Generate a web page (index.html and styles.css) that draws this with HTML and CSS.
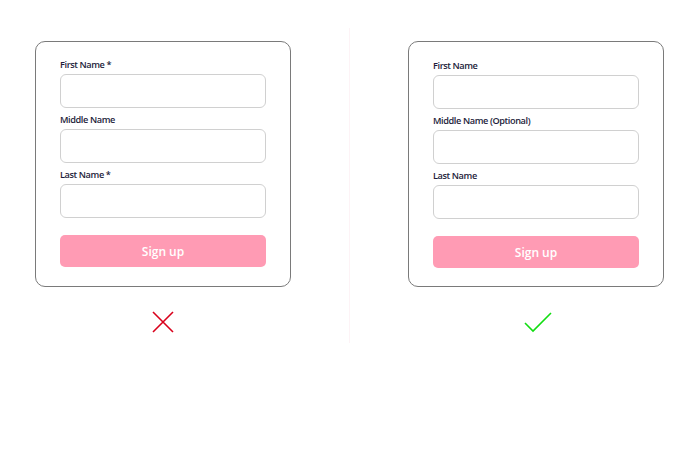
FILE: index.html
```html
<!DOCTYPE html>
<html lang="en">
<head>
  <meta charset="UTF-8" />
  <title>Optional field labels</title>
  <link rel="stylesheet" href="styles.css">
</head>
<body>
  <div class="compare">
    <div class="column">
      <form class="signup-card">
        <label class="field-label">First Name *</label>
        <input class="field-input" type="text" />
        <label class="field-label">Middle Name</label>
        <input class="field-input" type="text" />
        <label class="field-label">Last Name *</label>
        <input class="field-input" type="text" />
        <button type="button" class="signup-btn">Sign up</button>
      </form>
      <svg class="verdict" width="22" height="22" viewBox="0 0 22 22">
        <path d="M1 1 L21 21 M21 1 L1 21" stroke="#d9001b" stroke-width="1.6" fill="none" />
      </svg>
    </div>

    <div class="divider"></div>

    <div class="column">
      <form class="signup-card shifted">
        <label class="field-label">First Name</label>
        <input class="field-input" type="text" />
        <label class="field-label">Middle Name (Optional)</label>
        <input class="field-input" type="text" />
        <label class="field-label">Last Name</label>
        <input class="field-input" type="text" />
        <button type="button" class="signup-btn">Sign up</button>
      </form>
      <svg class="verdict check" width="28" height="22" viewBox="0 0 28 22">
        <path d="M1 12 L9 20 L27 2" stroke="#11dd11" stroke-width="1.6" fill="none" />
      </svg>
    </div>
  </div>
</body>
</html>
```

FILE: styles.css
```css
:root {
  --card-border: #7a7a7a;
  --input-border: #d0d0d0;
  --label-color: #1d1d3b;
  --pink: #ff9bb4;
}

body {
  margin: 0;
  padding: 28px 35px 0;
  background: #fff;
  font-family: 'Open Sans', sans-serif;
}

.compare {
  display: flex;
  gap: 58px;
  height: 315px;
}

.column {
  width: 256px;
  padding-top: 13px;
  display: flex;
  flex-direction: column;
  align-items: center;
}

.divider {
  width: 1px;
  background: #fdf3f6;
}

.signup-card {
  box-sizing: border-box;
  width: 256px;
  height: 246px;
  border: 1px solid var(--card-border);
  border-radius: 10px;
  padding: 16px 24px 0;
  display: flex;
  flex-direction: column;
}

.signup-card.shifted {
  padding-top: 17px;
}

.field-label {
  font-size: 9.2px;
  font-weight: 600;
  letter-spacing: -0.4px;
  color: var(--label-color);
  line-height: 14px;
  margin-bottom: 2px;
}

.field-input {
  box-sizing: border-box;
  height: 34px;
  border: 1.5px solid var(--input-border);
  border-radius: 6px;
  margin: 0 0 5px;
  padding: 0;
}

.signup-btn {
  margin-top: 12px;
  height: 32px;
  border: none;
  border-radius: 5px;
  background: var(--pink);
  color: #fff;
  font-family: 'Open Sans', sans-serif;
  font-size: 12px;
  font-weight: 600;
}

.verdict {
  margin-top: 24px;
}

.verdict.check {
  margin-left: 4px;
}
```
